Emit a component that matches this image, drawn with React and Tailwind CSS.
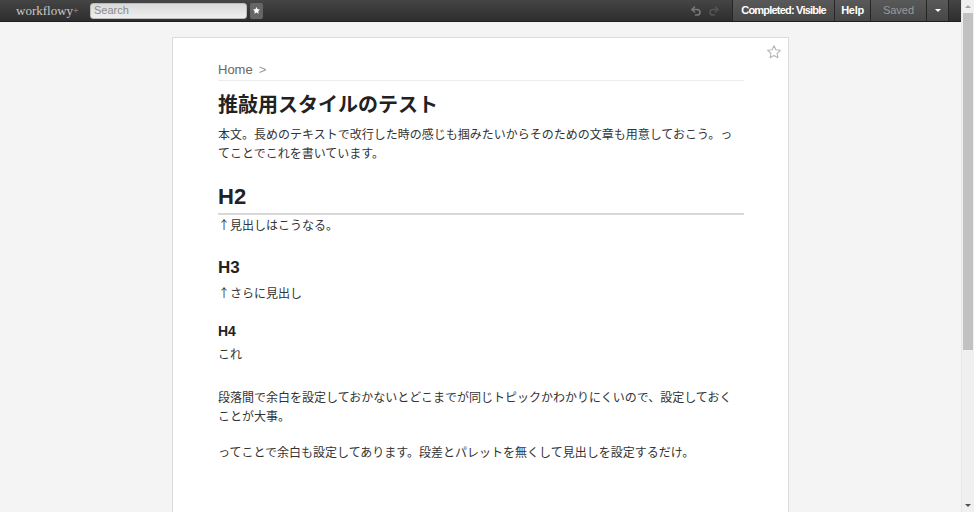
import { Undo2, Redo2 } from 'lucide-react';

const jp = { fontFamily: '"Liberation Sans", "Noto Sans CJK JP", sans-serif' };
const jpText = { fontFamily: '"Noto Sans CJK JP", "Liberation Sans", sans-serif' };

const StarOutline = ({ className }) => (
  <svg viewBox="0 0 24 24" className={className} fill="none" stroke="currentColor" strokeWidth="1.6" strokeLinejoin="round">
    <path d="M12 2.5l2.9 6.1 6.6.8-4.9 4.6 1.3 6.6L12 17.3l-5.9 3.3 1.3-6.6-4.9-4.6 6.6-.8z" />
  </svg>
);

const StarSolid = ({ className }) => (
  <svg viewBox="0 0 24 24" className={className} fill="currentColor">
    <path d="M12 2.5l2.9 6.1 6.6.8-4.9 4.6 1.3 6.6L12 17.3l-5.9 3.3 1.3-6.6-4.9-4.6 6.6-.8z" />
  </svg>
);

const TopBar = () => (
  <div className="h-[22px] flex items-stretch bg-gradient-to-b from-[#454545] to-[#2e2e2e] border-b border-[#1e1e1e]" style={{ fontFamily: '"Liberation Sans", Arial, sans-serif' }}>
    {/* logo */}
    <div className="pl-[16px] w-[90px] flex items-center text-[13px] text-[#c8c8c8]" style={{ fontFamily: '"Liberation Serif", serif' }}>
      workflowy<span className="text-[10px] text-[#999]">+</span>
    </div>
    {/* search */}
    <div className="flex items-center gap-[3px]">
      <div className="w-[157px] h-[16px] rounded-[3px] bg-gradient-to-b from-[#d9d9d9] to-[#efefef] border border-[#bbb] flex items-center pl-[3px] text-[11px] text-[#8a8a8a]">
        Search
      </div>
      <div className="w-[13px] h-[16px] rounded-[2px] bg-[#666] flex items-center justify-center">
        <StarSolid className="w-[9px] h-[9px] text-white" />
      </div>
    </div>
    <div className="flex-1" />
    {/* undo redo */}
    <div className="flex items-center gap-[6px] pr-[12px]">
      <Undo2 className="w-[12px] h-[12px] text-[#7a7a7a]" strokeWidth={3} />
      <Redo2 className="w-[12px] h-[12px] text-[#555]" strokeWidth={3} />
    </div>
    <div className="w-[102px] flex items-center justify-center bg-gradient-to-b from-[#595959] to-[#474747] border-l border-[#262626] text-[11px] text-white font-bold tracking-[-0.8px]">
      Completed: Visible
    </div>
    <div className="w-[36px] flex items-center justify-center bg-gradient-to-b from-[#595959] to-[#474747] border-l border-[#262626] text-[11px] text-white font-bold tracking-[-0.3px]">
      Help
    </div>
    <div className="w-[56px] flex items-center justify-center bg-gradient-to-b from-[#595959] to-[#474747] border-l border-[#262626] text-[11px] text-[#9a9a9a]">
      Saved
    </div>
    <div className="w-[23px] flex items-center justify-center bg-gradient-to-b from-[#595959] to-[#474747] border-l border-[#262626] border-r">
      <span className="w-0 h-0 border-l-[3px] border-r-[3px] border-t-[3px] border-l-transparent border-r-transparent border-t-white" />
    </div>
    <div className="w-[12px]" />
  </div>
);

const ScrollBar = () => (
  <div className="w-[13px] h-full bg-[#f0f0f0] border-l border-[#e6e6e6] flex flex-col">
    <div className="h-[13px] flex items-center justify-center">
      <span className="w-0 h-0 border-l-[3px] border-r-[3px] border-b-[3px] border-l-transparent border-r-transparent border-b-[#a3a3a3]" />
    </div>
    <div className="h-[337px] mx-[1px] bg-[#c1c1c1]" />
    <div className="flex-1" />
    <div className="h-[14px] flex items-center justify-center">
      <span className="w-0 h-0 border-l-[3px] border-r-[3px] border-t-[3px] border-l-transparent border-r-transparent border-t-[#505050]" />
    </div>
  </div>
);

export default function App() {
  return (
    <div className="w-[974px] h-[512px] flex overflow-hidden bg-[#f4f4f4]">
      <div className="flex-1 flex flex-col min-w-0">
        <TopBar />
        <main className="flex-1 overflow-hidden pt-[15px]">
          <div className="relative mx-auto w-[617px] h-[520px] bg-white border border-[#dcdcdc] pl-[45px] pr-[44px] pt-[23px] text-[#333]" style={jp}>
            <StarOutline className="absolute top-[6px] right-[6px] w-[16px] h-[16px] text-[#b5b5b5]" />

            <div className="h-[20px] leading-[18px] pb-[2px] border-b border-[#ececec] text-[13px]">
              <span className="text-[#666]">Home</span>
              <span className="text-[#999] ml-[6px]">&gt;</span>
            </div>

            <h1 className="mt-[10px] text-[20px] leading-[26px] font-bold text-[#222]" style={jpText}>推敲用スタイルのテスト</h1>
            <p className="mt-[7px] max-w-[518px] text-[12px] leading-[19px]" style={jpText}>
              本文。長めのテキストで改行した時の感じも掴みたいからそのための文章も用意しておこう。ってことでこれを書いています。
            </p>

            <h2 className="mt-[21px] text-[22px] leading-[28px] font-bold text-[#222] pb-[2px] border-b-2 border-[#d8d8d8]">H2</h2>
            <p className="mt-0 text-[12px] leading-[19px]" style={jpText}>↑見出しはこうなる。</p>

            <h3 className="mt-[23px] text-[17px] leading-[22px] font-bold text-[#222]">H3</h3>
            <p className="mt-[4px] text-[12px] leading-[19px]" style={jpText}>↑さらに見出し</p>

            <h4 className="mt-[20px] text-[14px] leading-[18px] font-bold text-[#222]">H4</h4>
            <p className="mt-[4px] text-[12px] leading-[19px]" style={jpText}>これ</p>

            <p className="mt-[24px] max-w-[518px] text-[12px] leading-[19px]" style={jpText}>
              段落間で余白を設定しておかないとどこまでが同じトピックかわかりにくいので、設定しておくことが大事。
            </p>
            <p className="mt-[17px] max-w-[518px] text-[12px] leading-[19px]" style={jpText}>
              ってことで余白も設定してあります。段差とパレットを無くして見出しを設定するだけ。
            </p>
          </div>
        </main>
      </div>
      <ScrollBar />
    </div>
  );
}
